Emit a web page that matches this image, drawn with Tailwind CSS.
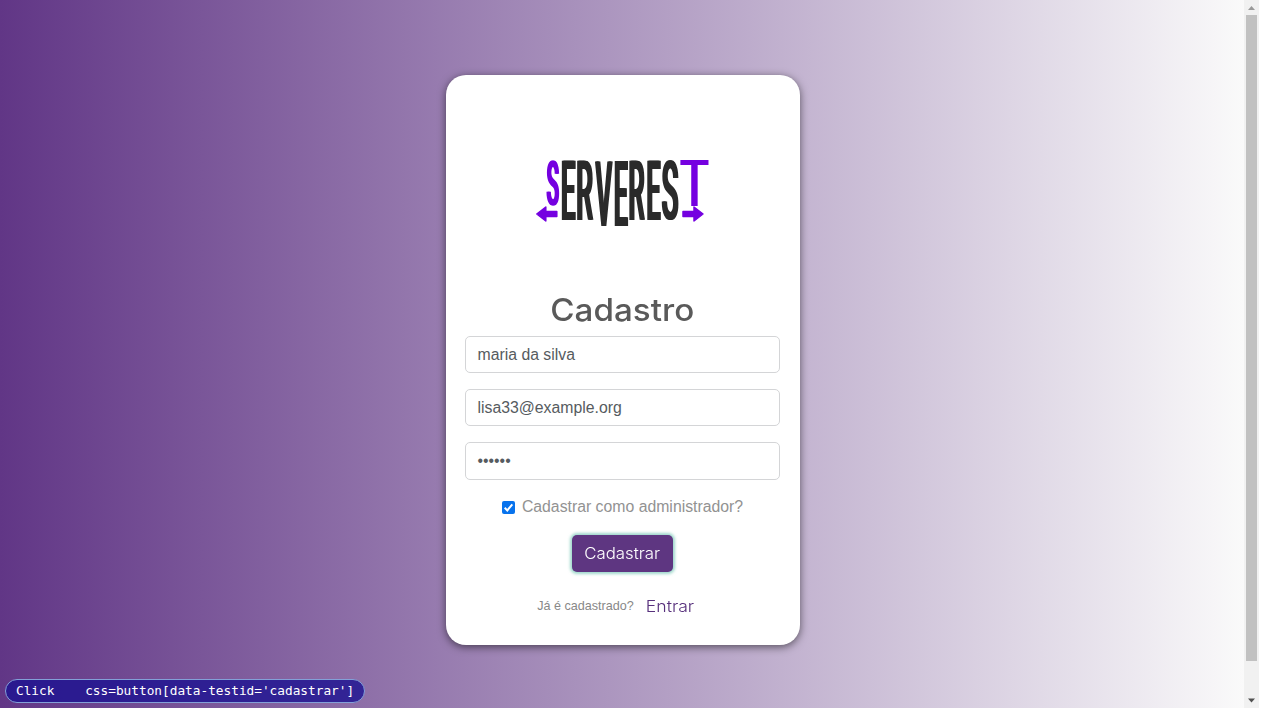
<!DOCTYPE html>
<html lang="pt-BR">
<head>
<meta charset="utf-8">
<title>Cadastro</title>
<script src="https://cdn.jsdelivr.net/npm/@tailwindcss/browser@4"></script>
</head>
<body class="h-[720px] overflow-hidden bg-white font-['Liberation_Sans',sans-serif]">
<div class="relative flex h-[708px] w-[1259px]">
  <main class="flex w-[1244px] items-start justify-center bg-[linear-gradient(90deg,#613686_0%,#fafafa_100%)] pt-[75px] pl-[1px]">
    <section class="flex h-[570px] w-[354px] flex-col items-center rounded-[20px] bg-white px-5 shadow-[0_2px_8px_rgba(0,0,0,0.55)]">
      <svg class="mt-[75px] ml-[5px] h-[85px] w-[200px] shrink-0 overflow-visible" viewBox="525 150 200 85" role="img" aria-label="ServeRest">
        <defs><filter id="thick" filterUnits="userSpaceOnUse" x="525" y="150" width="200" height="85"><feOffset in="SourceGraphic" dx="-1.2" result="l"/><feOffset in="SourceGraphic" dx="1.2" result="r"/><feMerge><feMergeNode in="l"/><feMergeNode in="r"/><feMergeNode in="SourceGraphic"/></feMerge></filter></defs>
        <g font-family="Roboto, sans-serif" font-weight="500" font-size="100" filter="url(#thick)">
          <g fill="#7400e0">
            <text transform="translate(546.7 204.8) scale(.2 .62)">S</text>
            <text font-weight="400" transform="translate(680.2 205.5) scale(.475 .64)">T</text>
          </g>
          <g fill="#292929">
            <text transform="translate(560.9 220) scale(.255 .84)">E</text>
            <text transform="translate(576.2 220) scale(.265 .84)">R</text>
            <text transform="translate(595.7 225.5) scale(.25 .915)">V</text>
            <text transform="translate(614 225.5) scale(.243 .915)">E</text>
            <text transform="translate(628.5 220) scale(.255 .84)">R</text>
            <text transform="translate(646.4 220) scale(.248 .84)">E</text>
            <text transform="translate(661.7 219) scale(.275 .815)">S</text>
          </g>
        </g>
        <g fill="#7400e0" stroke="#7400e0" stroke-linejoin="round" stroke-width="1.500">
          <path d="M536.800 214l9-7v4.500h11v5h-11v4.500z"/>
          <path d="M703 214l-9-7v4.500h-11v5h11v4.500z"/>
        </g>
      </svg>
      <h1 class="mt-[55px] h-[39px] scale-x-[1.07] font-[Inter,sans-serif] text-[31px] leading-[40px] font-medium text-[#5a5a5a]">Cadastro</h1>
      <div class="mt-[7px] flex w-[315px] flex-col gap-4 text-[15.800px] text-[#565b60]">
        <div class="flex h-[37.200px] items-center rounded-[5px] border border-[#d4d5d7] px-[11.500px]">maria da silva</div>
        <div class="flex h-[37.200px] items-center rounded-[5px] border border-[#d4d5d7] px-[11.500px]">lisa33@example.org</div>
        <div class="flex h-[37.200px] items-center rounded-[5px] border border-[#d4d5d7] px-[11.500px]">••••••</div>
      </div>
      <label class="mt-[15.500px] flex h-6 items-center gap-[7px] text-[15.800px] text-[#929292]">
        <svg class="size-[13px]" viewBox="0 0 13 13"><rect width="13" height="13" rx="2" fill="#0873ed"/><path d="M2.700 6.800l2.600 2.600 5-6" fill="none" stroke="#fff" stroke-width="2"/></svg>
        Cadastrar como administrador?
      </label>
      <button class="mt-4 h-[37px] w-[101px] shrink-0 rounded-[5px] bg-[#5e3681] pb-[2px] font-[Inter,sans-serif] text-base font-light text-white shadow-[0_0_3px_2px_rgba(95,190,170,0.6)]"><span class="inline-block scale-x-[1.05]">Cadastrar</span></button>
      <div class="mt-[22px] flex h-6 items-center gap-[14px] pr-[16px]">
        <small class="text-[12.600px] text-[#888]">Já é cadastrado?</small>
        <a class="inline-block scale-x-[1.1] font-[Inter,sans-serif] text-base font-light text-[#57307c]">Entrar</a>
      </div>
    </section>
  </main>
  <aside class="flex w-[15px] flex-col items-center justify-between bg-[#f1f1f1]">
    <svg class="h-[15px] w-[15px]" viewBox="0 0 15 15"><path d="M4 10h7L7.500 6z" fill="#999"/></svg>
    <div class="mb-auto h-[646px] w-[11px] bg-[#c1c1c1]"></div>
    <svg class="h-[15px] w-[15px]" viewBox="0 0 15 15"><path d="M4 5.500h7L7.500 9.500z" fill="#505050"/></svg>
  </aside>
  <div class="absolute top-[679px] left-[5px] flex h-6 w-[360px] items-center rounded-full border border-[#83a0d8] bg-[#1c1191]/80 pl-[10px] font-['DejaVu_Sans_Mono',monospace] text-[12.780px] whitespace-pre text-white">Click    css=button[data-testid='cadastrar']</div>
</div>
</body>
</html>
